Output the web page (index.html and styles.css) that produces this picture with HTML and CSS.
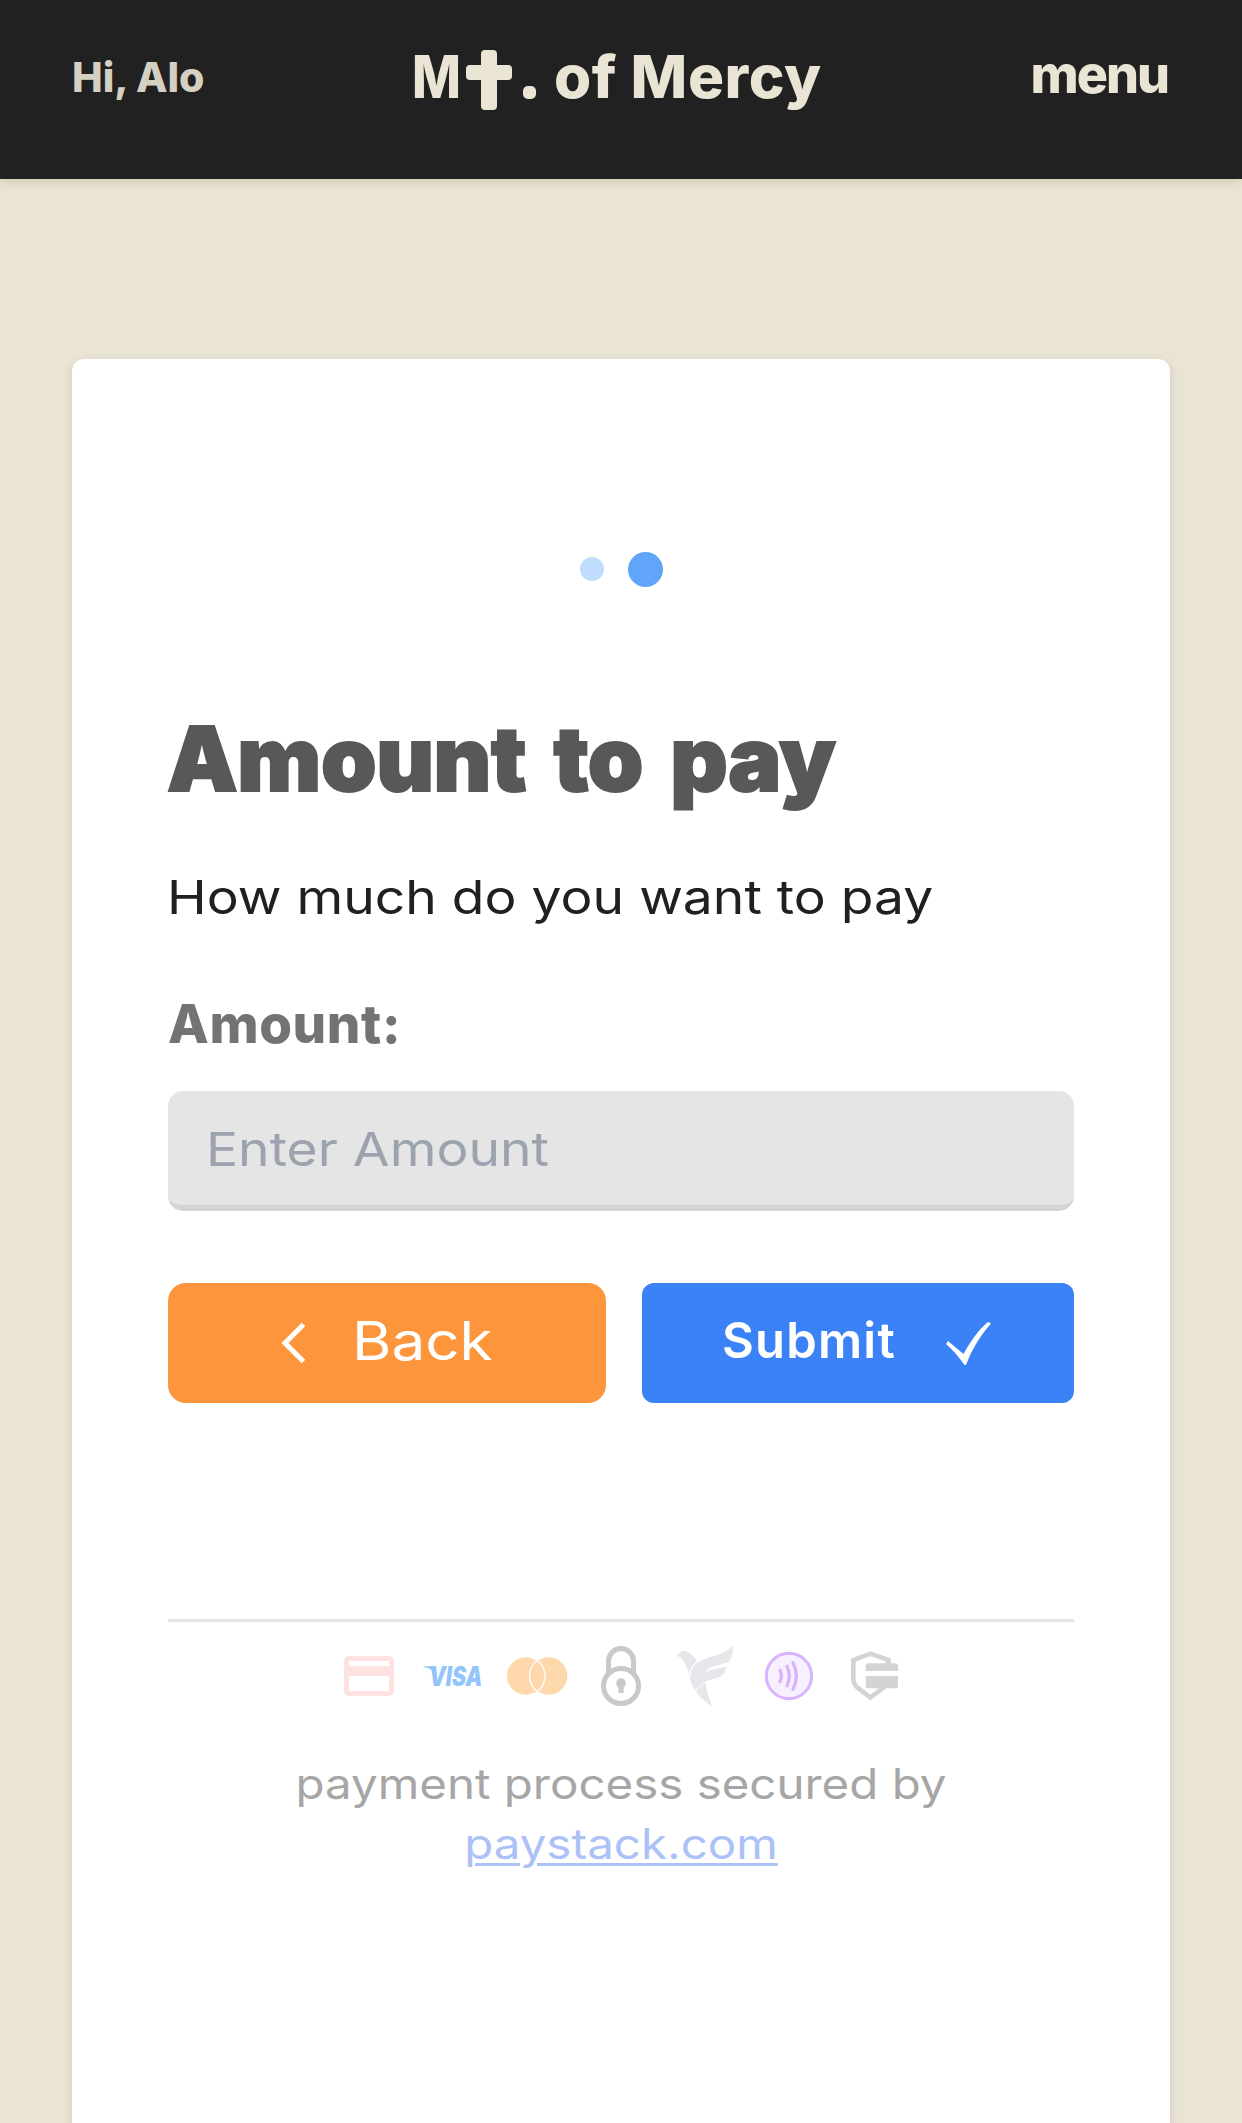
FILE: index.html
```html
<!DOCTYPE html>
<html lang="en">
<head>
<meta charset="utf-8">
<title>Mt. of Mercy</title>
<link rel="stylesheet" href="styles.css">
</head>
<body>
<header class="topbar">
  <div class="greeting">Hi, Alo</div>
  <div class="brand"><span class="brand-m">M</span><svg class="cross" viewBox="0 0 46 60"><rect x="15" width="16" height="60" rx="4"/><rect y="15" width="46" height="15" rx="4"/></svg><span class="dot"></span><span class="brand-rest">of Mercy</span></div>
  <div class="menu">menu</div>
</header>
<main class="card">
  <div class="steps"><i class="step"></i><i class="step step-active"></i></div>
  <h1>Amount to pay</h1>
  <p class="lead"><span class="wide">How much do you want to pay</span></p>
  <label class="label">Amount:</label>
  <div class="field"><span class="wide">Enter Amount</span></div>
  <div class="actions">
    <button class="btn back"><svg class="chevron" viewBox="0 0 23 40"><path d="M21.500 1.500L3 20l18.500 18.500"/></svg><span class="btn-text wide">Back</span></button>
    <button class="btn submit"><span class="btn-text">Submit</span><svg class="check" viewBox="0 0 45 43"><path d="M0 22L2 19 17.500 32C24 20 33 7 42 0L45 1.500C34 14 26 27 20 43L18.500 43C13 35 7 28 0 22z"/></svg></button>
  </div>
  <footer class="secured">
    <div class="icons">
      <svg viewBox="0 0 180 180"><path fill="#fee2e2" fill-rule="evenodd" d="M30 30H150a15 15 0 0 1 15 15V135a15 15 0 0 1-15 15H30a15 15 0 0 1-15-15V45a15 15 0 0 1 15-15zM30 45V60H150V45zM30 90V135H150V90z"/></svg>
      <svg viewBox="0 0 180 180"><text class="visa" x="18" y="119" textLength="160" lengthAdjust="spacingAndGlyphs">VISA</text><path fill="#93c5fd" d="M1 61H34L38 86C28 72 17 65 1 63z"/></svg>
      <svg viewBox="0 0 180 180"><g fill="#fed7aa"><circle cx="56" cy="90" r="56"/><circle cx="125" cy="90" r="56"/></g><path fill="none" stroke="#fff" stroke-width="4" d="M91 43C60 68 60 112 91 137C122 112 122 68 91 43z"/></svg>
      <svg viewBox="0 0 180 180"><g fill="none" stroke="#c9c9c9" stroke-width="15"><circle cx="90" cy="120" r="52.500"/><path d="M52.500 82V45a37.500 37.500 0 0 1 75 0V82"/></g><path fill="#c9c9c9" d="M90 97a15 15 0 0 1 8 27V141H82V124a15 15 0 0 1 8-27z"/></svg>
      <svg viewBox="0 0 180 180"><g fill="#e5e7eb"><path d="M5 29L20 14C38 14 54 24 66 45C52 57 44 69 42 86C36 62 26 34 5 29z"/><path d="M175 0C174 22 170 38 160 48C143 55 110 58 92 75L94 79C115 66 139 68 155 61C150 82 143 90 128 95C98 102 78 109 62 133C45 115 42 96 48 77C61 29 131 40 175 0z"/><path d="M93 110C92 139 106 157 111 180C94 170 75 154 63 138C70 124 79 115 93 110z"/></g></svg>
      <svg viewBox="0 0 180 180"><circle cx="90" cy="90" r="68" fill="#f7f0ff" stroke="#d8b4fe" stroke-width="9"/><path fill="none" stroke="#d8b4fe" stroke-width="10" stroke-linecap="round" d="M63 73Q71 90 63 107M84 61Q98 90 84 119M102 50Q122 90 102 130"/></svg>
      <svg viewBox="0 0 180 180"><path fill="none" stroke="#d4d4d4" stroke-width="14" d="M136 56V42L82 23 31 42V98Q31 114 44 125L82 155 128 120"/><path fill="#d4d4d4" d="M76 52H157a8 8 0 0 1 8 8V75H68V60a8 8 0 0 1 8-8zM68 90H165V119a8 8 0 0 1-8 8H76a8 8 0 0 1-8-8z"/></svg>
    </div>
    <p class="note">payment process secured by<br><a>paystack.com</a></p>
  </footer>
</main>
</body>
</html>
```
FILE: styles.css
```css
* { box-sizing: border-box; }
body { margin: 0; height: 2123px; overflow: hidden; background: #eae4d4; font-family: Inter, "Liberation Sans", sans-serif; color: #202020; display: flex; flex-direction: column; }
h1, p { margin: 0; }
svg { display: block; flex: none; overflow: visible; }
.wide { display: inline-block; transform-origin: left center; transform: scaleX(1.136); white-space: nowrap; }
.topbar { height: 179px; flex: none; padding: 0 72px 25px; display: grid; grid-template-columns: 1fr auto 1fr; align-items: center; background: #212121; color: #eae4d4; box-shadow: 0 3px 9px rgba(80, 60, 20, .14); white-space: nowrap; }
.greeting { font-size: 41px; font-weight: 800; color: #d6d0c3; }
.brand { width: 414px; margin-right: 4px; display: flex; align-items: center; font-size: 59px; font-weight: 800; line-height: 72px; }
.brand > span { margin-top: -1px; }
.brand-m { width: 54px; transform-origin: left center; transform: scaleX(.88); }
.cross { width: 46px; height: 60px; margin: 6px 11px 0 0; fill: #eae4d4; }
.brand > .dot { width: 13px; height: 13px; border-radius: 5px; background: #eae4d4; margin: 31px 18px 0 0; }
.brand-rest { transform-origin: left center; transform: scaleX(1.02); letter-spacing: .5px; }
.menu { font-size: 52px; font-weight: 800; letter-spacing: -2px; text-align: right; padding: 0 2px 6px 0; }
.card { flex: 1; margin: 180px 72px 0; padding: 192px 96px 0; background: #fff; border-radius: 12px 12px 0 0; box-shadow: 0 3px 9px rgba(80, 70, 40, .16); }
.steps { display: flex; justify-content: center; align-items: center; gap: 24px; height: 36px; }
.step { width: 24px; height: 24px; border-radius: 50%; background: #bfdbfe; }
.step-active { width: 35px; height: 35px; background: #60a5fa; }
h1 { margin: 124px 0 0 -1px; font-size: 89px; line-height: 96px; font-weight: 900; letter-spacing: -.4px; word-spacing: 10px; -webkit-text-stroke: 2px #585858; color: #585858; white-space: nowrap; }
.lead { margin: 54px 0 0 -1px; font-size: 47px; line-height: 72px; }
.label { display: block; margin-top: 61px; font-size: 53px; line-height: 60px; font-weight: 800; letter-spacing: .6px; color: #737373; }
.field { margin-top: 37px; height: 120px; padding: 0 38px; display: flex; align-items: center; background: #e5e5e5; border-bottom: 6px solid #d4d4d4; border-radius: 15px; font-size: 47px; color: #9ca3af; }
.actions { margin-top: 72px; display: flex; gap: 36px; }
.btn { height: 120px; border: 0; font-family: inherit; color: #fff; display: flex; align-items: center; }
.btn-text { margin-bottom: 5px; }
.back { width: 438px; padding: 0 0 0 114px; border-radius: 18px; background: #fd953c; font-size: 53px; gap: 47px; }
.submit { width: 432px; padding: 0 0 0 80px; border-radius: 12px; background: #3b82f6; font-size: 49px; font-weight: 600; letter-spacing: 1.2px; gap: 50px; }
.chevron { width: 23px; height: 40px; fill: none; stroke: #fff; stroke-width: 5; }
.check { width: 45px; height: 43px; fill: #fff; }
.secured { margin-top: 216px; border-top: 3px solid #e5e5e5; padding-top: 24px; }
.icons { display: flex; justify-content: center; gap: 24px; }
.icons svg { width: 60px; height: 60px; }
.visa { font: italic 900 80px Inter, "Liberation Sans", sans-serif; fill: #93c5fd; }
.note { margin-top: 48px; font-size: 42px; line-height: 60px; text-align: center; color: #a6a6a6; transform: scaleX(1.13); }
.note a { color: #abc1f7; text-decoration: underline; text-decoration-thickness: 3px; text-underline-offset: 4px; }
```
